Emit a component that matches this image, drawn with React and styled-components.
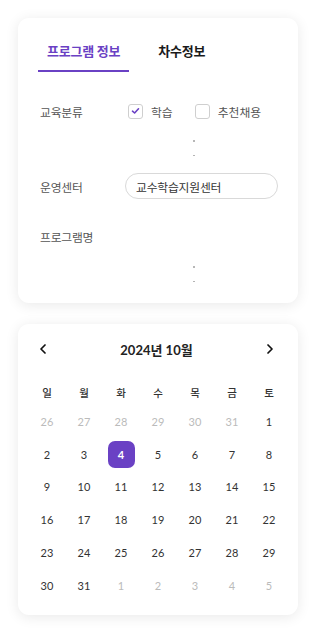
import React from "react";
import styled, { createGlobalStyle } from "styled-components";
import { ChevronLeft, ChevronRight } from "lucide-react";

const Global = createGlobalStyle`
  html, body { margin: 0; padding: 0; background: #ffffff; }
  body { font-family: Lato, "Noto Sans CJK KR", sans-serif; color: #333; }
  * { box-sizing: border-box; }
`;

const PURPLE = "#6a41c4";

const Page = styled.div`
  width: 320px;
  padding: 18px 22px 18px 18px;
  display: flex;
  flex-direction: column;
  gap: 21px;
`;

const Card = styled.div`
  width: 280px;
  background: #fff;
  border-radius: 11px;
  box-shadow: 0 2px 14px rgba(0, 0, 0, 0.09);
`;

const InfoCard = styled(Card)`
  height: 285px;
  padding: 24px 20px 0 20px;
`;

const Tabs = styled.div`
  display: flex;
  gap: 20px;
`;

const Tab = styled.div`
  padding: 0 9px 10px;
  height: 30px;
  font-family: "Noto Sans CJK KR", sans-serif;
  font-size: 13px;
  line-height: 18px;
  font-weight: 700;
  letter-spacing: -0.2px;
  white-space: nowrap;
  color: ${(p) => (p.$active ? PURPLE : "#1a1a1a")};
  border-bottom: 2px solid ${(p) => (p.$active ? PURPLE : "transparent")};
`;

const Form = styled.div`
  display: flex;
  flex-direction: column;
  padding-left: 2px;
  margin-top: 26px;
`;

const Row = styled.div`
  display: flex;
  align-items: center;
  height: 26px;
  white-space: nowrap;
  margin-top: ${(p) => p.$mt || 0}px;
`;

const Label = styled.div`
  width: 85px;
  flex-shrink: 0;
  font-family: "Noto Sans CJK KR", sans-serif;
  font-size: 11.8px;
  color: #555;
  letter-spacing: -0.2px;
`;

const Check = styled.span`
  width: 15px;
  height: 15px;
  flex-shrink: 0;
  border: 1px solid #cfcfcf;
  border-radius: 3px;
  display: inline-flex;
  align-items: center;
  justify-content: center;
  margin-left: 3px;
  margin-right: 8px;
`;

const CheckText = styled.span`
  font-family: "Noto Sans CJK KR", sans-serif;
  font-size: 11.8px;
  color: #555;
  margin-right: 19px;
  flex-shrink: 0;
`;

const Input = styled.div`
  width: 153px;
  height: 26px;
  flex-shrink: 0;
  border: 1px solid #d9d9d9;
  border-radius: 13px;
  padding: 0 10px;
  display: flex;
  align-items: center;
  font-family: "Noto Sans CJK KR", sans-serif;
  font-size: 11.8px;
  color: #333;
  letter-spacing: -0.2px;
`;

const Dots = styled.div`
  display: flex;
  flex-direction: column;
  gap: 13px;
  padding-left: 153px;
  height: ${(p) => p.$h}px;
  padding-top: ${(p) => p.$pt}px;
`;

const Dot = styled.span`
  width: 1.5px;
  height: 1.5px;
  border-radius: 50%;
  background: #aaa;
`;

const CalCard = styled(Card)`
  padding: 14px 9.5px 13px;
`;

const Header = styled.div`
  display: flex;
  align-items: center;
  justify-content: space-between;
  height: 22px;
  padding: 0 10px 0 7px;
`;

const NavBtn = styled.span`
  display: inline-flex;
  color: #111;
`;

const Title = styled.div`
  font-family: Lato, "Noto Sans CJK KR", sans-serif;
  font-size: 13px;
  font-weight: 700;
  color: #222;
`;

const Grid = styled.div`
  display: grid;
  grid-template-columns: repeat(7, 37px);
  grid-template-rows: 26px;
  grid-auto-rows: 32.8px;
  justify-content: center;
  margin-top: 19px;
`;

const Weekday = styled.div`
  display: flex;
  align-items: center;
  justify-content: center;
  font-family: "Noto Sans CJK KR", sans-serif;
  font-size: 10.5px;
  font-weight: 500;
  color: #333;
`;

const Day = styled.div`
  display: flex;
  align-items: center;
  justify-content: center;
`;

const DayNum = styled.span`
  width: 27px;
  height: 27px;
  border-radius: 7px;
  display: flex;
  align-items: center;
  justify-content: center;
  font-family: Lato, sans-serif;
  font-size: 11px;
  font-weight: ${(p) => (p.$sel ? 700 : 400)};
  color: ${(p) => (p.$sel ? "#fff" : p.$muted ? "#bbb" : "#333")};
  background: ${(p) => (p.$sel ? PURPLE : "transparent")};
`;

const weekdays = ["일", "월", "화", "수", "목", "금", "토"];

const days = [
  ...[26, 27, 28, 29, 30, 31].map((d) => ({ d, m: true })),
  ...Array.from({ length: 31 }, (_, i) => ({ d: i + 1, m: false })),
  ...[1, 2, 3, 4, 5].map((d) => ({ d, m: true })),
];

export default function App() {
  return (
    <>
      <Global />
      <Page>
        <InfoCard>
          <Tabs>
            <Tab $active>프로그램 정보</Tab>
            <Tab>차수정보</Tab>
          </Tabs>
          <Form>
            <Row>
              <Label>교육분류</Label>
              <Check>
                <svg width="9" height="8" viewBox="0 0 9 8">
                  <path d="M1.5 4.2 L3.6 6 L7.5 1.8" fill="none" stroke={PURPLE} strokeWidth="1.6" strokeLinecap="round" strokeLinejoin="round" />
                </svg>
              </Check>
              <CheckText>학습</CheckText>
              <Check />
              <CheckText>추천채용</CheckText>
            </Row>
            <Dots $h={49} $pt={16}>
              <Dot />
              <Dot />
            </Dots>
            <Row>
              <Label>운영센터</Label>
              <Input>교수학습지원센터</Input>
            </Row>
            <Row $mt={24}>
              <Label>프로그램명</Label>
            </Row>
            <Dots $h={40} $pt={17}>
              <Dot />
              <Dot />
            </Dots>
          </Form>
        </InfoCard>
        <CalCard>
          <Header>
            <NavBtn>
              <ChevronLeft size={16} strokeWidth={2.6} />
            </NavBtn>
            <Title>2024년 10월</Title>
            <NavBtn>
              <ChevronRight size={16} strokeWidth={2.6} />
            </NavBtn>
          </Header>
          <Grid>
            {weekdays.map((w) => (
              <Weekday key={w}>{w}</Weekday>
            ))}
            {days.map((x, i) => (
              <Day key={i}>
                <DayNum $muted={x.m} $sel={!x.m && x.d === 4}>
                  {x.d}
                </DayNum>
              </Day>
            ))}
          </Grid>
        </CalCard>
      </Page>
    </>
  );
}
